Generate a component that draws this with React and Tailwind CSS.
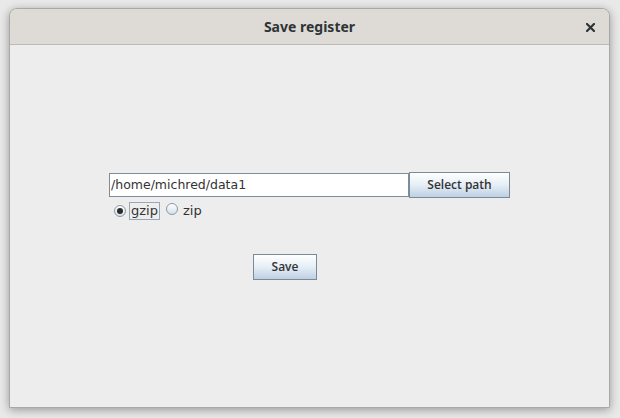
import React from "react";

function Radio({ checked }) {
  return (
    <span className="relative inline-flex h-[12px] w-[12px] items-center justify-center rounded-full border border-[#8a99a6] bg-gradient-to-b from-[#ffffff] to-[#d4e0ec]">
      {checked && <span className="h-[6px] w-[6px] rounded-full bg-[#2b2b2b]" />}
    </span>
  );
}

export default function App() {
  return (
    <div className="h-[418px] w-[620px] bg-[#e9e9e9] pl-[9px] pt-[8px]" style={{ fontFamily: '"DejaVu Sans", sans-serif' }}>
      <div className="flex h-[400px] w-[601px] flex-col overflow-hidden rounded-t-[8px] border border-[#a8a8a8] bg-[#ededed] shadow-[0_2px_10px_rgba(0,0,0,0.35)]">
        <div className="relative flex h-[36px] shrink-0 items-center justify-center border-b border-[#bdb9b4] bg-[#dedbd6]">
          <span className="text-[14px] font-bold text-[#2e3436]" style={{ fontFamily: '"Noto Sans", sans-serif' }}>Save register</span>
          <svg className="absolute right-[14px] top-[14px]" width="9" height="9" viewBox="0 0 9 9">
            <path d="M1 1L8 8M8 1L1 8" stroke="#2e3436" strokeWidth="2.2" strokeLinecap="square" />
          </svg>
        </div>
        <div className="flex flex-col pl-[99px] pt-[127px]">
          <div className="flex items-center">
            <div className="flex h-[24px] w-[300px] items-center border border-[#7f8c99] bg-white pl-[1px] text-[12.5px] text-[#333]">/home/michred/data1</div>
            <div className="flex h-[26px] w-[101px] items-center justify-center border border-[#7a8a99] bg-gradient-to-b from-[#ffffff] via-[#e6eef6] to-[#bdd0e4] text-[12px] font-semibold text-[#333]" style={{ fontFamily: '"Open Sans", sans-serif' }}>Select path</div>
          </div>
          <div className="mt-[3px] flex items-center pl-[5px] text-[13px] text-[#333]">
            <Radio checked />
            <span className="ml-[3px] border border-[#99a8b8] px-[1px] leading-[16px]">gzip</span>
            <span className="ml-[6px]"><Radio /></span>
            <span className="ml-[5px] leading-[16px]">zip</span>
          </div>
          <div className="ml-[144px] mt-[33px] flex h-[26px] w-[64px] items-center justify-center border border-[#7a8a99] bg-gradient-to-b from-[#ffffff] via-[#e6eef6] to-[#bdd0e4] text-[12px] font-semibold text-[#333]" style={{ fontFamily: '"Open Sans", sans-serif' }}>Save</div>
        </div>
      </div>
    </div>
  );
}
